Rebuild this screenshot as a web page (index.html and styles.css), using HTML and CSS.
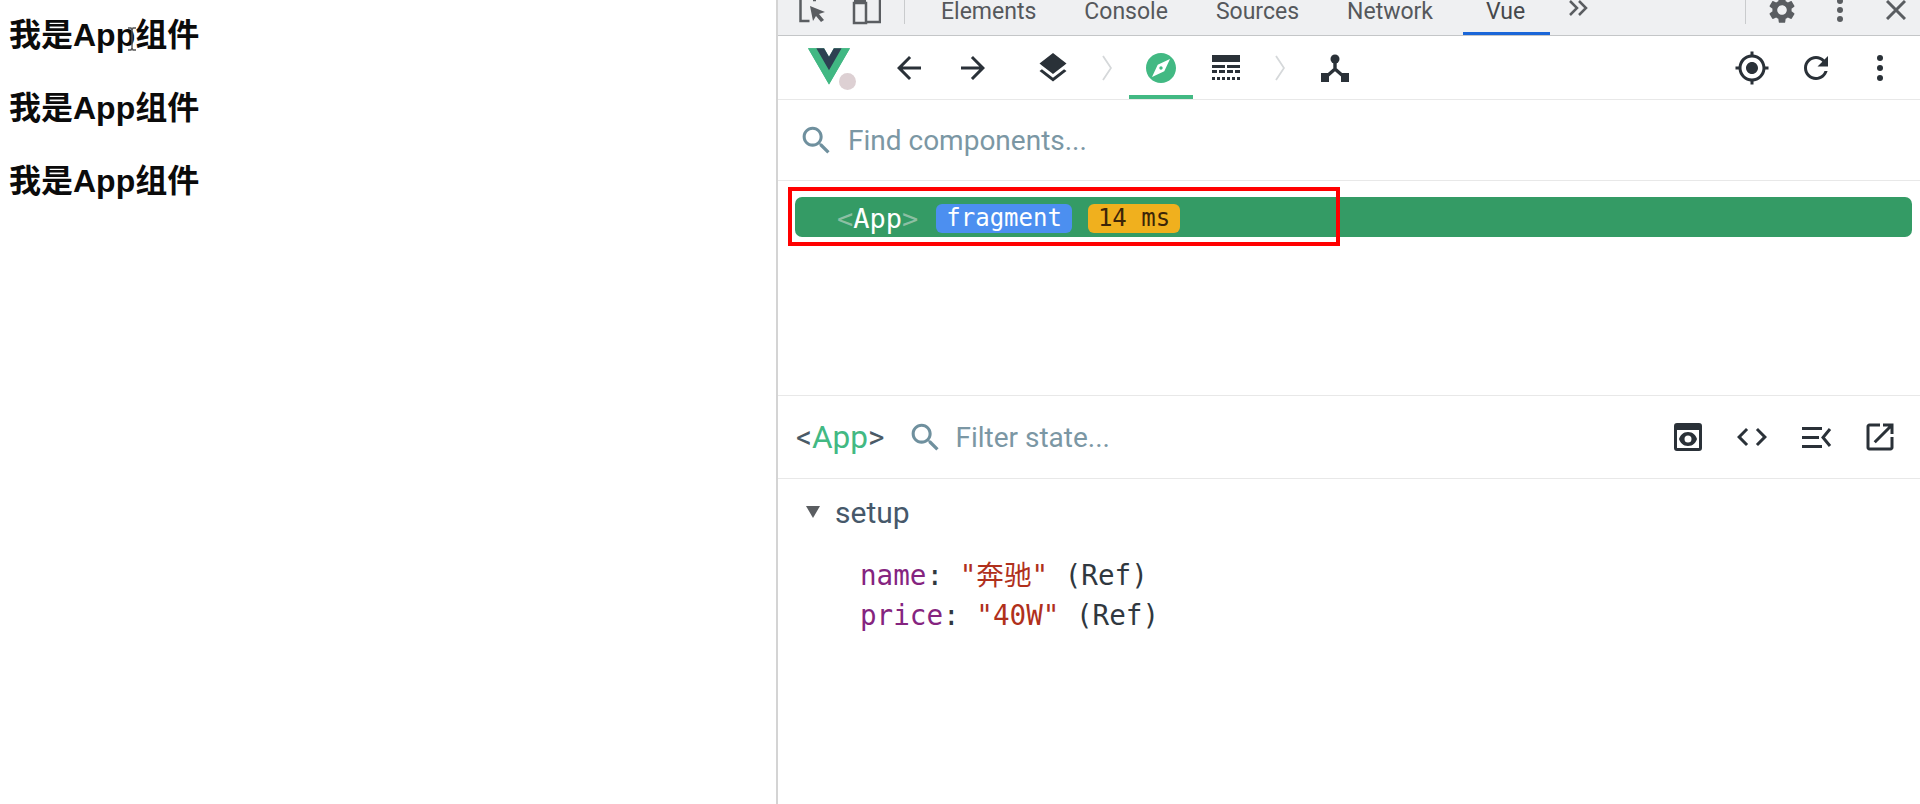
FILE: index.html
```html
<!DOCTYPE html>
<html lang="zh">
  <head>
    <title>Vue Devtools</title>
    <meta charset="utf-8" />
    <link rel="stylesheet" href="styles.css">
  </head>

  <body>
    <div class="page">
      <h2>我是App组件</h2>
      <h2>我是App组件</h2>
      <h2>我是App组件</h2>
      <svg class="cursor" width="12" height="24" viewBox="0 0 12 24">
        <path d="M2 1h3l1 2 1-2h3M6 3v18M2 23h3l1-2 1 2h3" fill="none" stroke="#555" stroke-width="1.4" />
      </svg>
    </div>

    <div class="devtools">
      <div class="tabbar">
        <svg class="bar-icon inspect" width="28" height="24" viewBox="0 0 28 24">
          <path d="M1.5 0v21h9M14 0h3" fill="none" stroke="#5a5d61" stroke-width="2.5" />
          <path d="M11 6l15 6-6 2 5 6-3 2-5-6-3 5z" fill="#5a5d61" />
        </svg>
        <svg class="bar-icon device" width="30" height="26" viewBox="0 0 30 26">
          <path d="M3 4h12v20H3zM15 23h14V0" fill="none" stroke="#5a5d61" stroke-width="2.5" />
          <path d="M3 0h12v4H3z" fill="#5a5d61" />
        </svg>
        <span class="bar-sep first"></span>
        <span class="tab first">Elements</span>
        <span class="tab">Console</span>
        <span class="tab">Sources</span>
        <span class="tab">Network</span>
        <span class="tab active">Vue</span>
        <svg class="bar-icon more-tabs" width="20" height="16" viewBox="0 0 20 16">
          <path d="M2 1l7 7-7 7M11 1l7 7-7 7" fill="none" stroke="#5a5d61" stroke-width="2.5" />
        </svg>
        <span class="bar-sep last"></span>
        <svg class="bar-icon gear" width="32" height="32" viewBox="0 0 24 24">
          <path fill="#5a5d61" d="M19.14 12.94c.04-.3.06-.61.06-.94 0-.32-.02-.64-.07-.94l2.03-1.58c.18-.14.23-.41.12-.61l-1.92-3.32c-.12-.22-.37-.29-.59-.22l-2.39.96c-.5-.38-1.03-.7-1.62-.94l-.36-2.54c-.04-.24-.24-.41-.48-.41h-3.84c-.24 0-.43.17-.47.41l-.36 2.54c-.59.24-1.13.57-1.62.94l-2.39-.96c-.22-.08-.47 0-.59.22L2.74 8.87c-.12.21-.08.47.12.61l2.03 1.58c-.05.3-.09.63-.09.94s.02.64.07.94l-2.03 1.58c-.18.14-.23.41-.12.61l1.92 3.32c.12.22.37.29.59.22l2.39-.96c.5.38 1.03.7 1.62.94l.36 2.54c.05.24.24.41.48.41h3.84c.24 0 .44-.17.47-.41l.36-2.54c.59-.24 1.13-.56 1.62-.94l2.39.96c.22.08.47 0 .59-.22l1.92-3.32c.12-.22.07-.47-.12-.61l-2.01-1.58zM12 15.6c-1.98 0-3.6-1.62-3.6-3.6s1.62-3.6 3.6-3.6 3.6 1.62 3.6 3.6-1.62 3.6-3.6 3.6z" />
        </svg>
        <svg class="bar-icon bar-dots" width="8" height="28" viewBox="0 0 8 28">
          <circle cx="4" cy="4" r="3" fill="#5a5d61" /><circle cx="4" cy="13" r="3" fill="#5a5d61" /><circle cx="4" cy="22" r="3" fill="#5a5d61" />
        </svg>
        <svg class="bar-icon bar-close" width="20" height="20" viewBox="0 0 20 20">
          <path d="M1 1l18 18M19 1L1 19" fill="none" stroke="#5a5d61" stroke-width="3" />
        </svg>
      </div>

      <div class="toolbar">
        <div class="logo">
          <svg width="42" height="37" viewBox="0 0 256 221">
            <path fill="#41b883" d="M204.8 0H256L128 220.8 0 0h97.92L128 51.2 157.44 0h47.36Z" />
            <path fill="#41b883" d="M0 0l128 220.8L256 0h-51.2L128 132.48 50.56 0H0Z" />
            <path fill="#2d4152" d="M50.56 0L128 133.12 204.8 0h-47.36L128 51.2 97.92 0H50.56Z" />
          </svg>
          <span class="logo-dot"></span>
        </div>
        <svg class="tool back" width="36" height="36" viewBox="0 0 24 24"><path d="M20 11H7.83l5.59-5.59L12 4l-8 8 8 8 1.41-1.41L7.83 13H20v-2z" /></svg>
        <svg class="tool forward" width="36" height="36" viewBox="0 0 24 24"><path d="M12 4l-1.41 1.41L16.17 11H4v2h12.17l-5.58 5.59L12 20l8-8z" /></svg>
        <svg class="tool layers" width="36" height="36" viewBox="0 0 24 24"><path d="M11.99 18.54l-7.37-5.73L3 14.07l9 7 9-7-1.63-1.27-7.38 5.74zM12 16l7.36-5.73L21 9l-9-7-9 7 1.63 1.27L12 16z" /></svg>
        <svg class="chevron chevron-one" width="10" height="26" viewBox="0 0 10 26"><path d="M1 1l8 12-8 12" fill="none" stroke="#d5d8da" stroke-width="1.8" /></svg>
        <div class="tool-tab">
          <svg width="36" height="36" viewBox="0 0 24 24"><path fill="#42b983" d="M12 10.9c-.61 0-1.1.49-1.1 1.1s.49 1.1 1.1 1.1c.61 0 1.1-.49 1.1-1.1s-.49-1.1-1.1-1.1zM12 2C6.48 2 2 6.48 2 12s4.48 10 10 10 10-4.48 10-10S17.52 2 12 2zm2.19 12.19L6 18l3.81-8.19L18 6l-3.81 8.19z" /></svg>
        </div>
        <svg class="tool table" width="28" height="26" viewBox="0 0 28 26">
          <path d="M0 0h28v7H0z" />
          <path d="M0 10h13v3H0zM15 10h13v3H15zM0 15h5v3H0zM7 15h6v3H7zM15 15h6v3h-6zM23 15h5v3h-5z" />
          <path d="M0 22h3v3H0zM5 22h3v3H5zM10 22h3v3h-3zM15 22h3v3h-3zM20 22h3v3h-3zM25 22h3v3h-3z" />
        </svg>
        <svg class="chevron chevron-two" width="10" height="26" viewBox="0 0 10 26"><path d="M1 1l8 12-8 12" fill="none" stroke="#d5d8da" stroke-width="1.8" /></svg>
        <svg class="tool fork" width="28" height="28" viewBox="0 0 28 28">
          <circle cx="14" cy="5" r="4.5" />
          <path d="M14 8v8M14 15L6 22M14 15l8 7" fill="none" stroke="#2a3138" stroke-width="3.4" />
          <path d="M0 19h8v9H0zM20 19h8v9h-8z" />
        </svg>
        <div class="tools-right">
          <svg class="tool" width="36" height="36" viewBox="0 0 24 24"><path d="M12 8c-2.21 0-4 1.79-4 4s1.79 4 4 4 4-1.79 4-4-1.79-4-4-4zm8.94 3c-.46-4.17-3.77-7.48-7.94-7.94V1h-2v2.06C6.83 3.52 3.52 6.83 3.06 11H1v2h2.06c.46 4.17 3.77 7.48 7.94 7.94V23h2v-2.06c4.17-.46 7.48-3.77 7.94-7.94H23v-2h-2.06zM12 19c-3.87 0-7-3.13-7-7s3.13-7 7-7 7 3.13 7 7-3.13 7-7 7z" /></svg>
          <svg class="tool" width="36" height="36" viewBox="0 0 24 24"><path d="M17.65 6.35C16.2 4.9 14.21 4 12 4c-4.42 0-7.99 3.58-7.99 8s3.57 8 7.99 8c3.73 0 6.84-2.55 7.73-6h-2.08c-.82 2.33-3.04 4-5.65 4-3.31 0-6-2.69-6-6s2.69-6 6-6c1.66 0 3.14.69 4.22 1.78L13 11h7V4l-2.35 2.35z" /></svg>
          <svg class="tool" width="36" height="36" viewBox="0 0 36 36"><circle cx="18" cy="8" r="3" /><circle cx="18" cy="18" r="3" /><circle cx="18" cy="28" r="3" /></svg>
        </div>
      </div>

      <div class="search">
        <svg width="37" height="37" viewBox="0 0 24 24"><path fill="#6f909e" d="M15.5 14h-.79l-.28-.27C15.41 12.59 16 11.11 16 9.5 16 5.91 13.09 3 9.5 3S3 5.91 3 9.5 5.91 16 9.5 16c1.61 0 3.09-.59 4.23-1.57l.27.28v.79l5 4.99L20.49 19l-4.99-5zm-6 0C7.01 14 5 11.99 5 9.5S7.01 5 9.5 5 14 7.01 14 9.5 11.99 14 9.5 14z" /></svg>
        <span class="search-text">Find components...</span>
      </div>

      <div class="tree">
        <div class="tree-row">
          <span class="tag-name"><i>&lt;</i>App<i>&gt;</i></span>
          <span class="badge badge-blue">fragment</span>
          <span class="badge badge-yellow">14 ms</span>
        </div>
        <div class="highlight"></div>
      </div>

      <div class="state-head">
        <span class="state-title">&lt;<b>App</b>&gt;</span>
        <svg width="37" height="37" viewBox="0 0 24 24"><path fill="#6f909e" d="M15.5 14h-.79l-.28-.27C15.41 12.59 16 11.11 16 9.5 16 5.91 13.09 3 9.5 3S3 5.91 3 9.5 5.91 16 9.5 16c1.61 0 3.09-.59 4.23-1.57l.27.28v.79l5 4.99L20.49 19l-4.99-5zm-6 0C7.01 14 5 11.99 5 9.5S7.01 5 9.5 5 14 7.01 14 9.5 11.99 14 9.5 14z" /></svg>
        <span class="filter-text">Filter state...</span>
        <div class="state-tools">
          <svg width="36" height="36" viewBox="0 0 36 36">
            <path fill-rule="evenodd" d="M7 4h22a3 3 0 0 1 3 3v22a3 3 0 0 1-3 3H7a3 3 0 0 1-3-3V7a3 3 0 0 1 3-3zm0 7v18h22V11z" />
            <path fill-rule="evenodd" d="M18 13c5 0 8 3.5 9 7-1 3.5-4 7-9 7s-8-3.5-9-7c1-3.5 4-7 9-7zm0 3.5a3.5 3.5 0 1 0 0 7 3.5 3.5 0 0 0 0-7z" />
          </svg>
          <svg width="36" height="36" viewBox="0 0 24 24"><path d="M9.4 16.6L4.8 12l4.6-4.6L8 6l-6 6 6 6 1.4-1.4zm5.2 0l4.6-4.6-4.6-4.6L16 6l6 6-6 6-1.4-1.4z" /></svg>
          <svg width="36" height="36" viewBox="0 0 36 36">
            <path d="M4 8h20v3H4zM4 17h17v3H4zM4 26h20v3H4z" />
            <path d="M32 10l-7 8.5 7 8.5" fill="none" stroke="#2a3138" stroke-width="3" />
          </svg>
          <svg width="36" height="36" viewBox="0 0 24 24"><path d="M19 19H5V5h7V3H5c-1.11 0-2 .9-2 2v14c0 1.1.89 2 2 2h14c1.1 0 2-.9 2-2v-7h-2v7zM14 3v2h3.59l-9.83 9.83 1.41 1.41L19 6.41V10h2V3h-7z" /></svg>
        </div>
      </div>

      <div class="state-body">
        <div class="section-head"><span class="arrow"></span>setup</div>
        <div class="data-row"><span class="key">name</span>: <span class="val">"奔驰"</span> (Ref)</div>
        <div class="data-row"><span class="key">price</span>: <span class="val">"40W"</span> (Ref)</div>
      </div>
    </div>
  </body>
</html>
```

FILE: styles.css
```css
* {
  box-sizing: border-box;
}

html,
body {
  margin: 0;
  height: 100%;
  overflow: hidden;
  background: #fff;
}

body {
  display: flex;
  font-family: Roboto, "Noto Sans CJK SC", sans-serif;
  color: #2c3e50;
}

svg {
  display: block;
  flex: none;
}

/* left side, the app itself */
.page {
  position: relative;
  width: 776px;
  padding-left: 9px;
  flex: none;
}

.page h2 {
  margin: 0;
  height: 73px;
  line-height: 71px;
  font-size: 32px;
  font-weight: bold;
  font-family: "Liberation Sans", "Noto Sans CJK SC", sans-serif;
  color: #0b0b0b;
}

.cursor {
  position: absolute;
  left: 126px;
  top: 27px;
}

/* right side */
.devtools {
  flex: 1;
  min-width: 0;
  border-left: 2px solid #d4d4d4;
  display: flex;
  flex-direction: column;
}

.tabbar {
  height: 36px;
  flex: none;
  display: flex;
  align-items: flex-start;
  background: #eff0f2;
  border-bottom: 1px solid #c4c6c8;
  overflow: hidden;
}

.tab {
  height: 35px;
  margin-left: 48px;
  font-size: 23px;
  line-height: 23px;
  color: #55585c;
}

.tab.first {
  margin-left: 36px;
}

.tab.active {
  position: relative;
  margin-left: 53px;
  color: #45484c;
}

.tab.active::after {
  content: "";
  position: absolute;
  left: -23px;
  right: -25px;
  bottom: 0;
  height: 3px;
  background: #1a66d8;
}

.bar-icon.inspect {
  margin: 0 0 0 21px;
}

.bar-icon.device {
  margin: -1px 0 0 24px;
}

.bar-sep {
  width: 1px;
  height: 24px;
  background: #c9cbcd;
}

.bar-sep.first {
  margin-left: 23px;
}

.bar-sep.last {
  margin-left: 157px;
}

.bar-icon.more-tabs {
  margin: 0 0 0 43px;
}

.bar-icon.gear {
  margin: -6px 0 0 20px;
}

.bar-icon.bar-dots {
  margin: -3px 0 0 38px;
}

.bar-icon.bar-close {
  margin: 0 0 0 42px;
}

.toolbar {
  height: 64px;
  flex: none;
  display: flex;
  align-items: center;
  padding: 0 22px 0 30px;
  border-bottom: 1px solid #e8e8e8;
}

.tool {
  fill: #2a3138;
}

.logo {
  position: relative;
  width: 42px;
  margin-top: -2px;
}

.logo-dot {
  position: absolute;
  left: 31px;
  top: 25px;
  width: 17px;
  height: 17px;
  border-radius: 50%;
  background: #ddd0d3;
}

.back {
  margin-left: 41px;
}

.forward {
  margin-left: 28px;
}

.layers {
  margin-left: 44px;
}

.chevron-one {
  margin-left: 31px;
}

.tool-tab {
  width: 64px;
  margin-left: 17px;
  align-self: stretch;
  display: flex;
  align-items: center;
  justify-content: center;
  border-bottom: 4px solid #42b983;
  padding-top: 4px;
}

.table {
  margin-left: 19px;
}

.chevron-two {
  margin-left: 35px;
}

.fork {
  margin-left: 36px;
}

.tools-right {
  margin-left: auto;
  display: flex;
  gap: 28px;
}

.search {
  height: 81px;
  flex: none;
  display: flex;
  align-items: center;
  padding-left: 20px;
  border-bottom: 1px solid #e8e8e8;
}

.search-text {
  margin-left: 13px;
  font-size: 28px;
  color: #7b97a4;
}

.tree {
  position: relative;
  height: 215px;
  flex: none;
  padding: 16px 8px 0 17px;
  border-bottom: 1px solid #e8e8e8;
}

.tree-row {
  height: 40px;
  display: flex;
  align-items: center;
  padding: 2px 0 0 42px;
  background: #349b65;
  border-radius: 7px;
}

.tag-name {
  font-size: 27px;
  color: #fff;
  font-family: "DejaVu Sans Mono", monospace;
}

.tag-name i {
  font-style: normal;
  color: #8cbfa3;
}

.badge {
  height: 29px;
  line-height: 29px;
  padding: 0 10px;
  border-radius: 6px;
  font-size: 24px;
  font-family: "DejaVu Sans Mono", monospace;
}

.badge-blue {
  margin-left: 18px;
  background: #4c8ff0;
  color: #fff;
}

.badge-yellow {
  margin-left: 16px;
  background: #f0b01e;
  color: #3c2508;
}

.highlight {
  position: absolute;
  left: 10px;
  top: 6px;
  width: 552px;
  height: 59px;
  border: 4px solid #f00;
}

.state-head {
  height: 83px;
  flex: none;
  display: flex;
  align-items: center;
  padding: 0 22px 0 18px;
  border-bottom: 1px solid #e8e8e8;
}

.state-title {
  font-size: 31.5px;
  color: #4a5a66;
}

.state-title b {
  font-weight: normal;
  color: #42b983;
}

.state-head > svg {
  margin-left: 23px;
}

.filter-text {
  margin-left: 11px;
  font-size: 28px;
  color: #7b97a4;
}

.state-tools {
  margin-left: auto;
  display: flex;
  gap: 28px;
  fill: #2a3138;
}

.state-body {
  padding: 18px 0 0 28px;
}

.section-head {
  display: flex;
  align-items: center;
  height: 30px;
  font-size: 30px;
  color: #46586a;
}

.arrow {
  width: 0;
  height: 0;
  margin-right: 15px;
  border-left: 7.5px solid transparent;
  border-right: 7.5px solid transparent;
  border-top: 12px solid #5a5d61;
}

.data-row {
  margin-left: 54px;
  height: 40px;
  line-height: 40px;
  font-size: 27.6px;
  font-family: "DejaVu Sans Mono", "Noto Sans CJK SC", monospace;
  color: #30383f;
}

.section-head + .data-row {
  margin-top: 29px;
}

.key {
  color: #85247f;
}

.val {
  color: #b0301c;
}
```
